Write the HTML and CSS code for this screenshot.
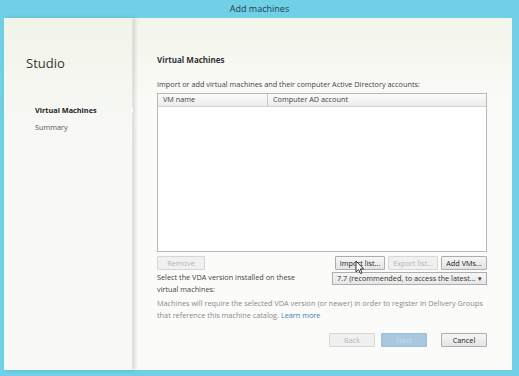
FILE: index.html
```html
<!DOCTYPE html>
<html lang="en">
<head>
  <meta charset="UTF-8">
  <title>Add machines</title>
  <link rel="stylesheet" href="styles.css">
</head>
<body>
  <div class="window">
    <div class="titlebar">Add machines</div>
    <div class="frame">
      <div class="sidebar">
        <h1>Studio</h1>
        <ul class="steps">
          <li class="active">Virtual Machines</li>
          <li>Summary</li>
        </ul>
        <span class="notch"></span>
      </div>
      <div class="main">
        <h2>Virtual Machines</h2>
        <p class="intro">Import or add virtual machines and their computer Active Directory accounts:</p>
        <div class="grid">
          <div class="grid-head">
            <div class="col-name">VM name</div>
            <div class="col-ad">Computer AD account</div>
          </div>
        </div>
        <div class="actions">
          <button class="btn disabled remove">Remove</button>
          <span class="spacer"></span>
          <button class="btn import">Import list...</button>
          <button class="btn disabled export">Export list...</button>
          <button class="btn add">Add VMs...</button>
          <svg class="cursor" width="10" height="15" viewBox="0 0 10 15">
            <path d="M1 1 L1 12 L3.6 9.6 L5.4 13.6 L7 12.9 L5.3 9 L8.6 9 Z" fill="#fff" stroke="#222" stroke-width="0.9"/>
          </svg>
        </div>
        <div class="vda">
          <div class="vda-label">Select the VDA version installed on these virtual machines:</div>
          <div class="select">
            <span>7.7 (recommended, to access the latest...</span>
            <span class="arrow">&#9662;</span>
          </div>
        </div>
        <p class="note">Machines will require the selected VDA version (or newer) in order to register in Delivery Groups that reference this machine catalog. <a href="#">Learn more</a></p>
        <div class="footer">
          <button class="btn disabled">Back</button>
          <button class="btn next">Next</button>
          <button class="btn cancel">Cancel</button>
        </div>
      </div>
    </div>
  </div>
</body>
</html>
```

FILE: styles.css
```css
body {
  margin: 0;
  padding: 0;
  font-family: "Open Sans", "Noto Sans", sans-serif;
  color: #333;
  background-color: #6fd0e6;
}
.window {
  width: 519px;
  height: 376px;
  display: flex;
  flex-direction: column;
}
.titlebar {
  height: 18px;
  line-height: 18px;
  text-align: center;
  font-size: 9px;
  color: #1d3f52;
}
.frame {
  flex: 1;
  display: flex;
  margin: 0 7px 6px 4px;
  background: linear-gradient(#f2f5ea, #fbfbf9 90px);
}
.sidebar {
  width: 129px;
  padding: 36px 0 0 22px;
  box-sizing: border-box;
  background: linear-gradient(#f1f4e9, #f8f9f6 120px);
  border-right: 1px solid #e2e2e0;
  box-shadow: 2px 0 4px rgba(0, 0, 0, 0.14);
  position: relative;
  z-index: 1;
}
.notch {
  position: absolute;
  right: -1px;
  top: 89px;
  width: 0;
  height: 0;
  border-top: 3px solid transparent;
  border-bottom: 3px solid transparent;
  border-right: 3px solid #fbfbf9;
}
.sidebar h1 {
  margin: 0;
  font-size: 13px;
  font-weight: normal;
  line-height: 18px;
  color: #333;
}
.steps {
  list-style: none;
  margin: 30px 0 0 9px;
  padding: 0;
  font-size: 7.3px;
}
.steps li {
  line-height: 17px;
  color: #555;
}
.steps li.active {
  font-weight: bold;
  color: #222;
}
.main {
  flex: 1;
  padding: 36px 25px 0 24px;
  font-size: 7.3px;
}
.main h2 {
  margin: 0;
  font-size: 8px;
  line-height: 12px;
  color: #333;
}
.intro {
  margin: 12px 0 0;
  line-height: 12px;
  color: #444;
}
.grid {
  margin-top: 3px;
  height: 159px;
  box-sizing: border-box;
  border: 1px solid #b8b8b8;
  background-color: #fff;
}
.grid-head {
  display: flex;
  height: 12px;
  line-height: 11px;
  border-bottom: 1px solid #d2d2d2;
  background: linear-gradient(#fbfbfb, #ededed);
  color: #444;
}
.col-name {
  width: 110px;
  padding-left: 5px;
  box-sizing: border-box;
  border-right: 1px solid #c8c8c8;
}
.col-ad {
  padding-left: 5px;
}
.actions {
  display: flex;
  gap: 3px;
  margin-top: 4px;
  position: relative;
}
.spacer {
  flex: 1;
}
.btn {
  height: 14px;
  padding: 0 3px;
  font-family: inherit;
  font-size: 7.3px;
  line-height: 12px;
  white-space: nowrap;
  color: #222;
  background: linear-gradient(#f6f6f6, #e4e4e4);
  border: 1px solid #adadad;
  border-radius: 1px;
}
.btn.disabled {
  color: #b4b4b4;
  border-color: #d6d6d6;
  background: #f0f0f0;
}
.actions .remove {
  width: 48px;
}
.actions .import,
.actions .export {
  width: 50px;
}
.actions .add {
  width: 46px;
}
.cursor {
  position: absolute;
  left: 198px;
  top: 4px;
}
.vda {
  display: flex;
  justify-content: space-between;
  margin-top: 1px;
}
.vda-label {
  width: 150px;
  line-height: 12px;
  color: #444;
}
.select {
  width: 155px;
  height: 13px;
  margin-top: 1px;
  box-sizing: border-box;
  display: flex;
  justify-content: space-between;
  padding: 0 4px;
  line-height: 11px;
  white-space: nowrap;
  overflow: hidden;
  border: 1px solid #adadad;
  background: linear-gradient(#f6f6f6, #e6e6e6);
  color: #333;
}
.arrow {
  font-size: 7px;
}
.note {
  margin: 3px 0 0;
  line-height: 11.5px;
  color: #8a8a8a;
}
.note a {
  color: #3a7dc2;
  text-decoration: none;
}
.footer {
  display: flex;
  justify-content: flex-end;
  gap: 6px;
  margin-top: 12px;
}
.footer .btn {
  width: 46px;
}
.footer .btn.next {
  color: #c9dcea;
  background: #a7c8df;
  border-color: #9bbdd6;
}
.footer .btn.cancel {
  margin-left: 8px;
}
```
